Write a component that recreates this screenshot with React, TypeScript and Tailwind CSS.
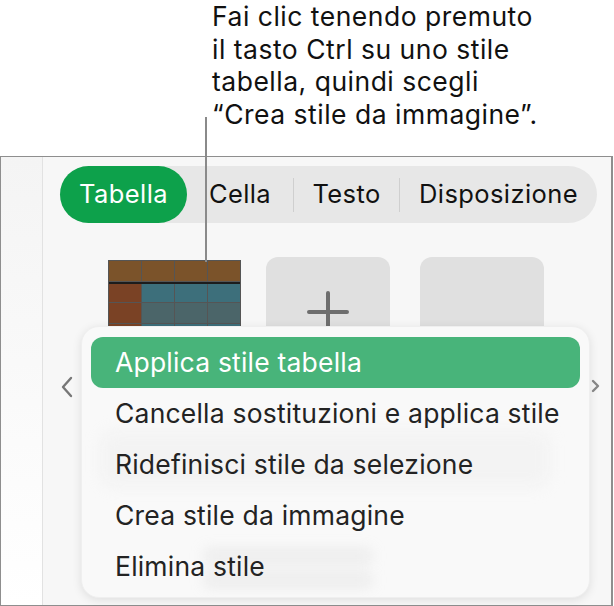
import React from 'react';

const font = { fontFamily: 'Inter, "Noto Sans", sans-serif' };

const tabs = ['Cella', 'Testo', 'Disposizione'];

const menuItems = [
  'Applica stile tabella',
  'Cancella sostituzioni e applica stile',
  'Ridefinisci stile da selezione',
  'Crea stile da immagine',
  'Elimina stile',
];

// miniatura dello stile tabella: intestazione marrone, colonna ruggine, celle blu-verdi
const TableThumb: React.FC = () => {
  const rows = [
    ['bg-[#7b532a]', 'bg-[#7b532a]', 'bg-[#7b532a]', 'bg-[#7b532a]'],
    ['bg-[#7a4225]', 'bg-[#3d6f7b]', 'bg-[#3d6f7b]', 'bg-[#3d6f7b]'],
    ['bg-[#7a4225]', 'bg-[#4b6569]', 'bg-[#4b6569]', 'bg-[#4b6569]'],
    ['bg-[#7a4225]', 'bg-[#3d6f7b]', 'bg-[#3d6f7b]', 'bg-[#3d6f7b]'],
  ];
  return (
    <div className="w-[133px] border border-[#555] bg-[#555] flex flex-col gap-px">
      {rows.map((r, i) => (
        <div key={i} className={`grid grid-cols-4 gap-px h-[20px] ${i === 1 ? 'border-t-2 border-[#1c1c1c]' : ''}`}>
          {r.map((c, j) => (
            <div key={j} className={c} />
          ))}
        </div>
      ))}
    </div>
  );
};

const App: React.FC = () => {
  return (
    <div className="relative w-[614px] h-[606px] bg-white overflow-hidden" style={font}>
      {/* didascalia */}
      <div className="h-[156px] pl-[212px]">
        <p className="text-[26.5px] leading-[32.5px] text-[#111] tracking-[0.5px]">
          Fai clic tenendo premuto
          <br />
          il tasto Ctrl su uno stile
          <br />
          tabella, quindi scegli
          <br />
          “Crea stile da immagine”.
        </p>
      </div>

      {/* riquadro della barra laterale */}
      <div className="h-[450px] border border-[#8e8e8e] border-r-[2px] mr-[1px] flex">
        <div className="w-[42px] border-r border-[#e2e2e2] bg-gradient-to-b from-[#f4f4f4] to-white" />
        <div className="flex-1 bg-[#f7f7f7] pt-[9px] pl-[17px]">
          <div className="w-[537px] h-[57px] rounded-full bg-[#e7e7e7] flex items-center text-[25.5px] tracking-[0.4px] text-[#111]">
            <div className="h-full w-[127px] rounded-full bg-[#0da14b] text-white flex items-center justify-center">
              Tabella
            </div>
            {tabs.map((t, i) => (
              <React.Fragment key={t}>
                {i > 0 && <div className="w-px h-[34px] bg-[#cfcfcf]" />}
                <div className={`flex items-center justify-center ${i === 0 ? 'w-[106px]' : i === 1 ? 'w-[105px]' : 'flex-1'}`}>
                  {t}
                </div>
              </React.Fragment>
            ))}
          </div>

          <div className="mt-[34px] ml-[37px] flex items-start">
            <div className="w-[154px] flex justify-center pt-[3px]">
              <TableThumb />
            </div>
            <div className="w-[154px] flex justify-center">
              <div className="w-[124px] h-[96px] rounded-[12px] bg-[#e0e0e0] flex items-center justify-center">
                <svg width="42" height="42" viewBox="0 0 42 42" className="mt-[14px]">
                  <path d="M21 2v38M2 21h38" stroke="#6e6e6e" strokeWidth="4" strokeLinecap="round" />
                </svg>
              </div>
            </div>
            <div className="w-[154px] flex justify-center">
              <div className="w-[124px] h-[96px] rounded-[12px] bg-[#e0e0e0]" />
            </div>
          </div>
        </div>
      </div>

      {/* linea del richiamo */}
      <div className="absolute left-[205px] top-[117px] w-[2px] h-[145px] bg-[#8a8a8a]" />

      {/* frecce di scorrimento */}
      <svg className="absolute left-[60px] top-[376px]" width="14" height="22" viewBox="0 0 14 22">
        <path d="M11 2L3 11l8 9" fill="none" stroke="#777" strokeWidth="2.4" strokeLinecap="round" strokeLinejoin="round" />
      </svg>
      <svg className="absolute left-[591px] top-[379px]" width="9" height="14" viewBox="0 0 9 14">
        <path d="M2 2l5 5-5 5" fill="none" stroke="#888" strokeWidth="2.4" strokeLinecap="round" strokeLinejoin="round" />
      </svg>

      {/* menu contestuale */}
      <div className="absolute left-[81px] top-[326px] w-[509px] h-[272px] rounded-[18px] bg-[#f9f9f9] shadow-[0_2px_10px_rgba(0,0,0,0.1)] border border-[#efefef] px-[9px] pt-[10px] overflow-hidden">
        {/* contenuto sfocato sotto il menu */}
        <div className="absolute left-[18px] top-[104px] w-[450px] h-[56px] rounded-[14px] bg-[#e4e4e4]/25 blur-[8px]" />
        <div className="absolute left-[122px] top-[222px] w-[168px] h-[14px] rounded bg-[#c4c4c4]/25 blur-[7px]" />
        <div className="absolute left-[122px] top-[246px] w-[168px] h-[14px] rounded bg-[#c4c4c4]/25 blur-[7px]" />
        <div className="relative flex flex-col">
          {menuItems.map((item, i) => (
            <div
              key={item}
              className={`h-[51px] pl-[24px] flex items-center text-[26.5px] tracking-[0.2px] rounded-[12px] ${
                i === 0 ? 'bg-[#48b47a] text-white' : 'text-[#232323]'
              }`}
            >
              {item}
            </div>
          ))}
        </div>
      </div>
    </div>
  );
};

export default App;
